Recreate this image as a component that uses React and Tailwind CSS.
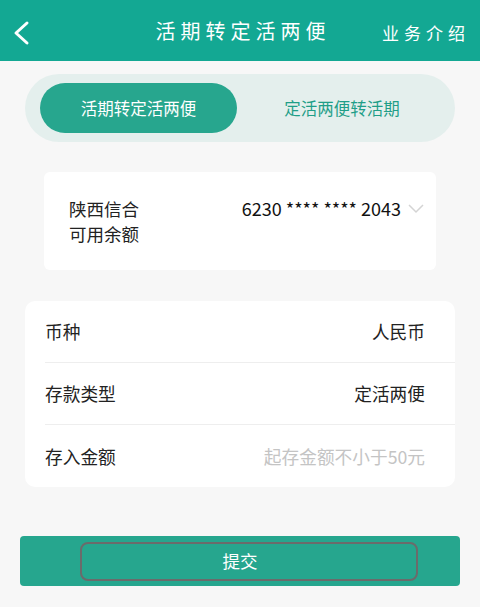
import { useState } from 'react';

const FONT = { fontFamily: '"Noto Sans CJK SC", "Noto Sans", sans-serif' };

function Row({ label, value, muted, last }) {
  return (
    <div className="flex items-center h-[62px] pl-5">
      <div
        className={`flex-1 flex items-center justify-between h-full pr-[30px] ${
          last ? '' : 'border-b border-[#eeeeee]'
        }`}
      >
        <span className="text-[17.7px] text-[#222]">{label}</span>
        <span className={`text-[17.7px] ${muted ? 'text-[#c4c4c4]' : 'text-[#222]'}`}>{value}</span>
      </div>
    </div>
  );
}

export default function App() {
  const [tab, setTab] = useState(0);

  return (
    <div className="w-[480px] h-[607px] bg-[#f7f7f7] overflow-hidden" style={FONT}>
      {/* Header */}
      <div className="relative h-[61px] bg-[#13a893] flex items-center justify-center">
        <svg
          className="absolute left-[12px] top-[20px]"
          width="20"
          height="26"
          viewBox="0 0 20 26"
          fill="none"
          stroke="white"
          strokeWidth="3"
          strokeLinecap="round"
          strokeLinejoin="round"
        >
          <path d="M15 3 L4 13 L15 23" />
        </svg>
        <span className="text-white text-[20px] tracking-[5px] pl-[6px]">活期转定活两便</span>
        <span className="absolute right-[10px] top-[20px] text-white text-[17px] tracking-[5px]">
          业务介绍
        </span>
      </div>

      {/* Segmented tabs */}
      <div className="px-[25px] pt-[13px]">
        <div className="h-[68px] rounded-full bg-[#e4efed] flex items-center px-[15px]">
          <button
            onClick={() => setTab(0)}
            className={`w-[197px] h-[50px] rounded-full text-[16.5px] ${
              tab === 0 ? 'bg-[#27a68e] text-white' : 'text-[#1f9e88]'
            }`}
          >
            活期转定活两便
          </button>
          <button
            onClick={() => setTab(1)}
            className={`flex-1 h-[50px] rounded-full text-[16.5px] pl-[7px] ${
              tab === 1 ? 'bg-[#27a68e] text-white' : 'text-[#1f9e88]'
            }`}
          >
            定活两便转活期
          </button>
        </div>
      </div>

      {/* Account card */}
      <div className="px-[44px] pt-[30px]">
        <div className="h-[98px] bg-white rounded-[6px] flex justify-between pl-[25px] pr-[12px] pt-[24px]">
          <div className="text-[17.5px] leading-[25px] text-[#222]">
            <div>陕西信合</div>
            <div>可用余额</div>
          </div>
          <div className="flex items-start gap-[7px] h-[25px]">
            <span className="text-[18px] leading-[25px] text-[#111]">6230 **** **** 2043</span>
            <svg width="16" height="25" viewBox="0 0 16 25" fill="none" stroke="#d4d4d4" strokeWidth="1.5">
              <path d="M1 9 L8 16 L15 9" />
            </svg>
          </div>
        </div>
      </div>

      {/* Form card */}
      <div className="px-[25px] pt-[31px]">
        <div className="bg-white rounded-[10px] overflow-hidden">
          <Row label="币种" value="人民币" />
          <Row label="存款类型" value="定活两便" />
          <Row label="存入金额" value="起存金额不小于50元" muted last />
        </div>
      </div>

      {/* Submit */}
      <div className="px-[20px] pt-[49px]">
        <button className="relative w-full h-[50px] rounded-[4px] bg-[#26a68e] flex items-center justify-center text-white text-[17.5px]">
          提交
          <span className="absolute left-[60px] top-[6px] w-[338px] h-[39px] rounded-[8px] border-2 border-[#6b6b6b]" />
        </button>
      </div>
    </div>
  );
}
